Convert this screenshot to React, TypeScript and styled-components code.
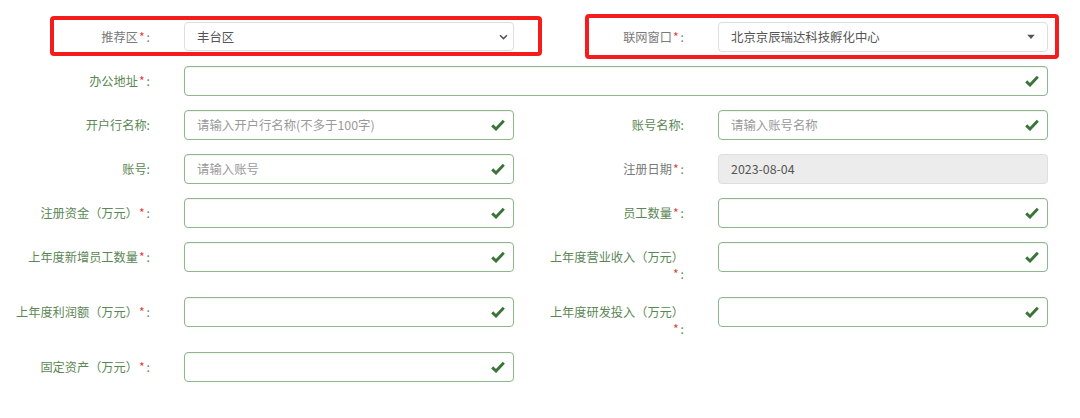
import React from "react";
import styled, { createGlobalStyle } from "styled-components";

const Global = createGlobalStyle`
  html, body { margin: 0; padding: 0; background: #fff; }
  body {
    font-family: "Microsoft YaHei", "Noto Sans CJK SC", "Noto Sans", sans-serif;
    font-size: 12px;
    color: #555;
  }
`;

const Form = styled.div`
  position: relative;
  width: 1080px;
  height: 418px;
  box-sizing: border-box;
  padding-top: 22px;
  display: flex;
  flex-direction: column;
  gap: 14px;
`;

const Row = styled.div`
  display: flex;
  align-items: flex-start;
  gap: 20px;
`;

const Field = styled.div<{ $wide?: boolean }>`
  display: grid;
  grid-template-columns: 150px ${(p) => (p.$wide ? "864px" : "330px")};
  column-gap: 34px;
  align-items: start;
`;

const Label = styled.label<{ $ok?: boolean }>`
  box-sizing: border-box;
  padding: 7px 0 0 12px;
  text-align: right;
  line-height: 17px;
  font-size: 12.2px;
  color: ${(p) => (p.$ok ? "#5b8755" : "#7a7a7a")};
`;

const Req = styled.span`
  white-space: nowrap;
  color: inherit;
  & > b {
    font-weight: normal;
    color: #e53935;
    margin-left: 1px;
    margin-right: 2px;
  }
`;

const Box = styled.div<{ $ok?: boolean; $disabled?: boolean; $h?: number }>`
  position: relative;
  box-sizing: border-box;
  height: ${(p) => p.$h ?? 30}px;
  border: 1px solid ${(p) => (p.$ok ? "#8fb58b" : "#dedede")};
  border-radius: 4px;
  background: ${(p) => (p.$disabled ? "#ececec" : "#fff")};
  box-shadow: ${(p) => (p.$ok ? "inset 0 1px 1px rgba(0,0,0,0.05)" : "none")};
  display: flex;
  align-items: center;
  padding: 0 28px 0 12px;
  font-size: 12.4px;
  color: #555;
`;

const Placeholder = styled.span`
  color: #9a9a9a;
`;

const Value = styled.span`
  color: #555;
`;

const Icon = styled.svg<{ $right: number }>`
  position: absolute;
  right: ${(p) => p.$right}px;
  top: 50%;
  transform: translateY(-50%);
`;

const Highlight = styled.div<{ $l: number; $t: number; $w: number; $h: number }>`
  position: absolute;
  left: ${(p) => p.$l}px;
  top: ${(p) => p.$t}px;
  width: ${(p) => p.$w}px;
  height: ${(p) => p.$h}px;
  box-sizing: border-box;
  border: 4px solid #f41c1c;
  border-radius: 4px;
  pointer-events: none;
`;

const Check = () => (
  <Icon $right={8} width="14" height="12" viewBox="0 0 14 12">
    <path d="M1.2 6.4 L5 10 L12.8 1.8" fill="none" stroke="#3a7437" strokeWidth="2.9" strokeLinejoin="miter" />
  </Icon>
);

const Chevron = () => (
  <Icon $right={5} width="9" height="6" viewBox="0 0 9 6">
    <path d="M1 1.2 L4.5 4.6 L8 1.2" fill="none" stroke="#555" strokeWidth="1.5" />
  </Icon>
);

const Caret = () => (
  <Icon $right={12} width="8" height="5" viewBox="0 0 8 5">
    <path d="M0 0 H8 L4 4.5 Z" fill="#555" />
  </Icon>
);

type LProps = { text: string; req?: boolean; ok?: boolean };
const L = ({ text, req, ok }: LProps) => (
  <Label $ok={ok}>
    {text}
    <Req>
      {req ? <b>*</b> : null}:
    </Req>
  </Label>
);

type InProps = { placeholder?: string };
const OkInput = ({ placeholder }: InProps) => (
  <Box $ok>
    {placeholder ? <Placeholder>{placeholder}</Placeholder> : null}
    <Check />
  </Box>
);

export default function App() {
  return (
    <>
      <Global />
      <Form>
        <Row>
          <Field>
            <L text="推荐区" req />
            <Box $h={29}>
              <Value>丰台区</Value>
              <Chevron />
            </Box>
          </Field>
          <Field>
            <L text="联网窗口" req />
            <Box $h={30}>
              <Value>北京京辰瑞达科技孵化中心</Value>
              <Caret />
            </Box>
          </Field>
        </Row>
        <Row>
          <Field $wide>
            <L text="办公地址" req ok />
            <OkInput />
          </Field>
        </Row>
        <Row>
          <Field>
            <L text="开户行名称" ok />
            <OkInput placeholder="请输入开户行名称(不多于100字)" />
          </Field>
          <Field>
            <L text="账号名称" ok />
            <OkInput placeholder="请输入账号名称" />
          </Field>
        </Row>
        <Row>
          <Field>
            <L text="账号" ok />
            <OkInput placeholder="请输入账号" />
          </Field>
          <Field>
            <L text="注册日期" req />
            <Box $disabled>
              <Value>2023-08-04</Value>
            </Box>
          </Field>
        </Row>
        <Row>
          <Field>
            <L text="注册资金（万元）" req ok />
            <OkInput />
          </Field>
          <Field>
            <L text="员工数量" req ok />
            <OkInput />
          </Field>
        </Row>
        <Row>
          <Field>
            <L text="上年度新增员工数量" req ok />
            <OkInput />
          </Field>
          <Field>
            <L text="上年度营业收入（万元）" req ok />
            <OkInput />
          </Field>
        </Row>
        <Row>
          <Field>
            <L text="上年度利润额（万元）" req ok />
            <OkInput />
          </Field>
          <Field>
            <L text="上年度研发投入（万元）" req ok />
            <OkInput />
          </Field>
        </Row>
        <Row>
          <Field>
            <L text="固定资产（万元）" req ok />
            <OkInput />
          </Field>
        </Row>
        <Highlight $l={50} $t={16} $w={492} $h={40} />
        <Highlight $l={585} $t={14} $w={474} $h={45} />
      </Form>
    </>
  );
}
